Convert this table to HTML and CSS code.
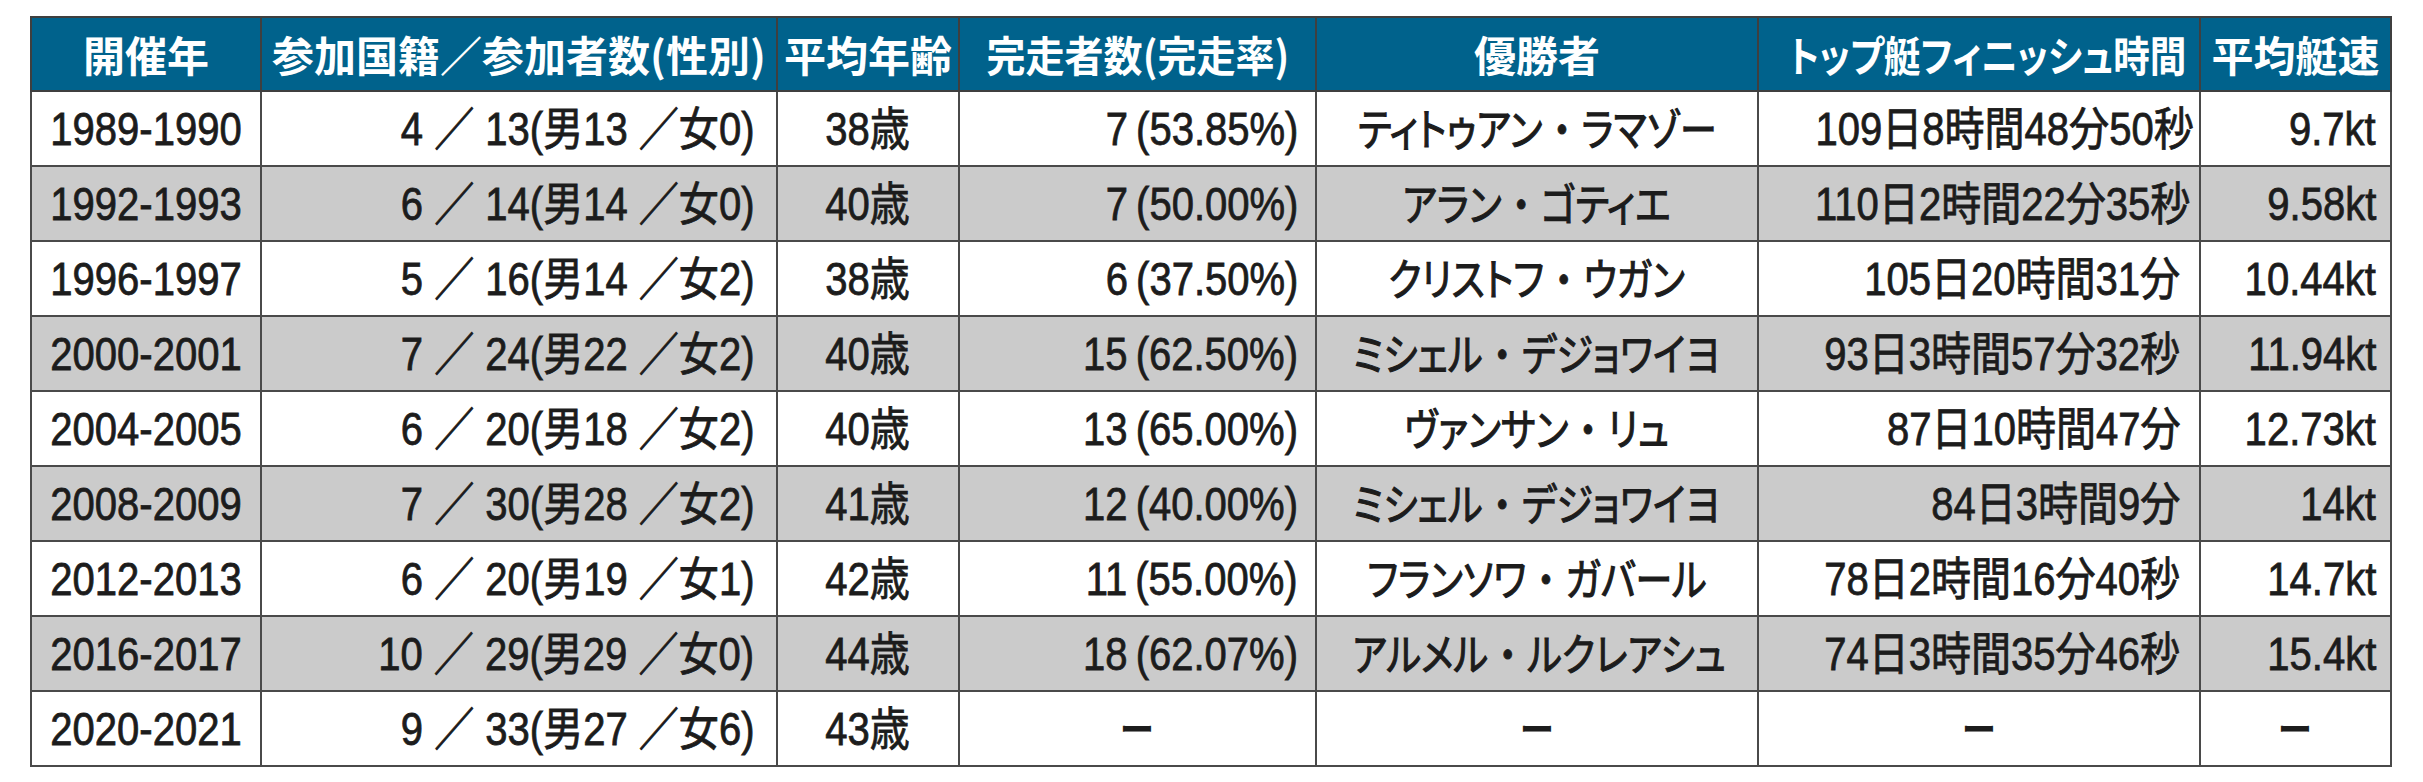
FILE: index.html
```html
<!DOCTYPE html>
<html lang="ja">
<head>
<meta charset="utf-8">
<title>ヴァンデ・グローブ 大会記録</title>
<link rel="stylesheet" href="styles.css">
</head>
<body>
<table class="records">
  <colgroup>
    <col class="c1"><col class="c2"><col class="c3"><col class="c4"><col class="c5"><col class="c6"><col class="c7">
  </colgroup>
  <thead>
    <tr>
      <th><span class="h">開催年</span></th>
      <th><span class="h">参加国籍／参加者数(性別)</span></th>
      <th><span class="h">平均年齢</span></th>
      <th><span class="h h-p">完走者数(完走率)</span></th>
      <th><span class="h">優勝者</span></th>
      <th><span class="h h-k">トップ艇フィニッシュ時間</span></th>
      <th><span class="h">平均艇速</span></th>
    </tr>
  </thead>
  <tbody>
    <tr>
      <td class="ctr"><span class="s">1989-1990</span></td>
      <td class="r2"><span class="s sr">4 ／ 13(男13 ／女0)</span></td>
      <td class="ctr"><span class="s">38歳</span></td>
      <td class="r4"><span class="s sr">7&#8201;(53.85%)</span></td>
      <td class="ctr"><span class="n">ティトゥアン<span class="dot">・</span>ラマゾー</span></td>
      <td class="r6"><span class="s sr">109日8時間48分50秒</span></td>
      <td class="r7"><span class="s sr">9.7kt</span></td>
    </tr>
    <tr class="alt">
      <td class="ctr"><span class="s">1992-1993</span></td>
      <td class="r2"><span class="s sr">6 ／ 14(男14 ／女0)</span></td>
      <td class="ctr"><span class="s">40歳</span></td>
      <td class="r4"><span class="s sr">7&#8201;(50.00%)</span></td>
      <td class="ctr"><span class="n">アラン<span class="dot">・</span>ゴティエ</span></td>
      <td class="r6"><span class="s sr">110日2時間22分35秒</span></td>
      <td class="r7"><span class="s sr">9.58kt</span></td>
    </tr>
    <tr>
      <td class="ctr"><span class="s">1996-1997</span></td>
      <td class="r2"><span class="s sr">5 ／ 16(男14 ／女2)</span></td>
      <td class="ctr"><span class="s">38歳</span></td>
      <td class="r4"><span class="s sr">6&#8201;(37.50%)</span></td>
      <td class="ctr"><span class="n">クリストフ<span class="dot">・</span>ウガン</span></td>
      <td class="r6"><span class="s sr">105日20時間31分</span></td>
      <td class="r7"><span class="s sr">10.44kt</span></td>
    </tr>
    <tr class="alt">
      <td class="ctr"><span class="s">2000-2001</span></td>
      <td class="r2"><span class="s sr">7 ／ 24(男22 ／女2)</span></td>
      <td class="ctr"><span class="s">40歳</span></td>
      <td class="r4"><span class="s sr">15&#8201;(62.50%)</span></td>
      <td class="ctr"><span class="n">ミシェル<span class="dot">・</span>デジョワイヨ</span></td>
      <td class="r6"><span class="s sr">93日3時間57分32秒</span></td>
      <td class="r7"><span class="s sr">11.94kt</span></td>
    </tr>
    <tr>
      <td class="ctr"><span class="s">2004-2005</span></td>
      <td class="r2"><span class="s sr">6 ／ 20(男18 ／女2)</span></td>
      <td class="ctr"><span class="s">40歳</span></td>
      <td class="r4"><span class="s sr">13&#8201;(65.00%)</span></td>
      <td class="ctr"><span class="n">ヴァンサン<span class="dot">・</span>リュ</span></td>
      <td class="r6"><span class="s sr">87日10時間47分</span></td>
      <td class="r7"><span class="s sr">12.73kt</span></td>
    </tr>
    <tr class="alt">
      <td class="ctr"><span class="s">2008-2009</span></td>
      <td class="r2"><span class="s sr">7 ／ 30(男28 ／女2)</span></td>
      <td class="ctr"><span class="s">41歳</span></td>
      <td class="r4"><span class="s sr">12&#8201;(40.00%)</span></td>
      <td class="ctr"><span class="n">ミシェル<span class="dot">・</span>デジョワイヨ</span></td>
      <td class="r6"><span class="s sr">84日3時間9分</span></td>
      <td class="r7"><span class="s sr">14kt</span></td>
    </tr>
    <tr>
      <td class="ctr"><span class="s">2012-2013</span></td>
      <td class="r2"><span class="s sr">6 ／ 20(男19 ／女1)</span></td>
      <td class="ctr"><span class="s">42歳</span></td>
      <td class="r4"><span class="s sr">11&#8201;(55.00%)</span></td>
      <td class="ctr"><span class="n">フランソワ<span class="dot">・</span>ガバール</span></td>
      <td class="r6"><span class="s sr">78日2時間16分40秒</span></td>
      <td class="r7"><span class="s sr">14.7kt</span></td>
    </tr>
    <tr class="alt">
      <td class="ctr"><span class="s">2016-2017</span></td>
      <td class="r2"><span class="s sr">10 ／ 29(男29 ／女0)</span></td>
      <td class="ctr"><span class="s">44歳</span></td>
      <td class="r4"><span class="s sr">18&#8201;(62.07%)</span></td>
      <td class="ctr"><span class="n">アルメル<span class="dot">・</span>ルクレアシュ</span></td>
      <td class="r6"><span class="s sr">74日3時間35分46秒</span></td>
      <td class="r7"><span class="s sr">15.4kt</span></td>
    </tr>
    <tr>
      <td class="ctr"><span class="s">2020-2021</span></td>
      <td class="r2"><span class="s sr">9 ／ 33(男27 ／女6)</span></td>
      <td class="ctr"><span class="s">43歳</span></td>
      <td class="ctr"><span class="dash">ー</span></td>
      <td class="ctr"><span class="dash">ー</span></td>
      <td class="ctr"><span class="dash">ー</span></td>
      <td class="ctr"><span class="dash">ー</span></td>
    </tr>
  </tbody>
</table>
</body>
</html>
```

FILE: styles.css
```css
html, body {
  margin: 0;
  padding: 0;
  background: #ffffff;
}

body {
  font-family: "Liberation Sans", "Noto Sans CJK JP", sans-serif;
  color: #1c1c1c;
}

.records {
  border-collapse: collapse;
  table-layout: fixed;
  width: 2360px;
  margin: 16px 0 0 30px;
  border: 2px solid #3f3f3f;
}

.c1 { width: 230px; }
.c2 { width: 516px; }
.c3 { width: 182px; }
.c4 { width: 357px; }
.c5 { width: 442px; }
.c6 { width: 442px; }
.c7 { width: 191px; }

.records th {
  background: #00628c;
  color: #ffffff;
  height: 72px;
  padding: 0;
  border: 2px solid #3f3f3f;
  text-align: center;
  vertical-align: middle;
  font-family: "Noto Sans CJK JP", sans-serif;
  font-weight: 700;
  font-size: 42px;
  line-height: 1;
  white-space: nowrap;
  font-feature-settings: "palt" 1;
}

.records td {
  height: 73px;
  padding: 0;
  border: 2px solid #4a4a4a;
  vertical-align: middle;
  font-size: 46px;
  line-height: 1;
  white-space: nowrap;
}

.records tr.alt td {
  background: #cbcbcb;
}

.h {
  display: inline-block;
}

.h-p {
  transform: scaleX(0.93);
}

.h-k {
  transform: scaleX(0.87);
}

.s {
  display: inline-block;
  transform: scaleX(0.87);
  -webkit-text-stroke: 0.8px #1c1c1c;
}

.sr {
  transform-origin: right center;
}

.n {
  display: inline-block;
  font-family: "Noto Sans CJK JP", sans-serif;
  font-size: 44px;
  font-weight: 400;
  font-feature-settings: "palt" 1;
  transform: scaleX(0.84);
  -webkit-text-stroke: 1.1px #1c1c1c;
}

.dot {
  margin: 0 0.28em;
}

.dash {
  display: inline-block;
  font-family: "Noto Sans CJK JP", sans-serif;
  font-size: 42px;
  font-weight: 700;
  transform: scale(0.82, 0.9);
}

.ctr { text-align: center; }
.r2 { text-align: right; padding-right: 22px !important; }
.r4 { text-align: right; padding-right: 17px !important; }
.r6 { text-align: right; padding-right: 19px !important; }
.r7 { text-align: right; padding-right: 14px !important; }
```
